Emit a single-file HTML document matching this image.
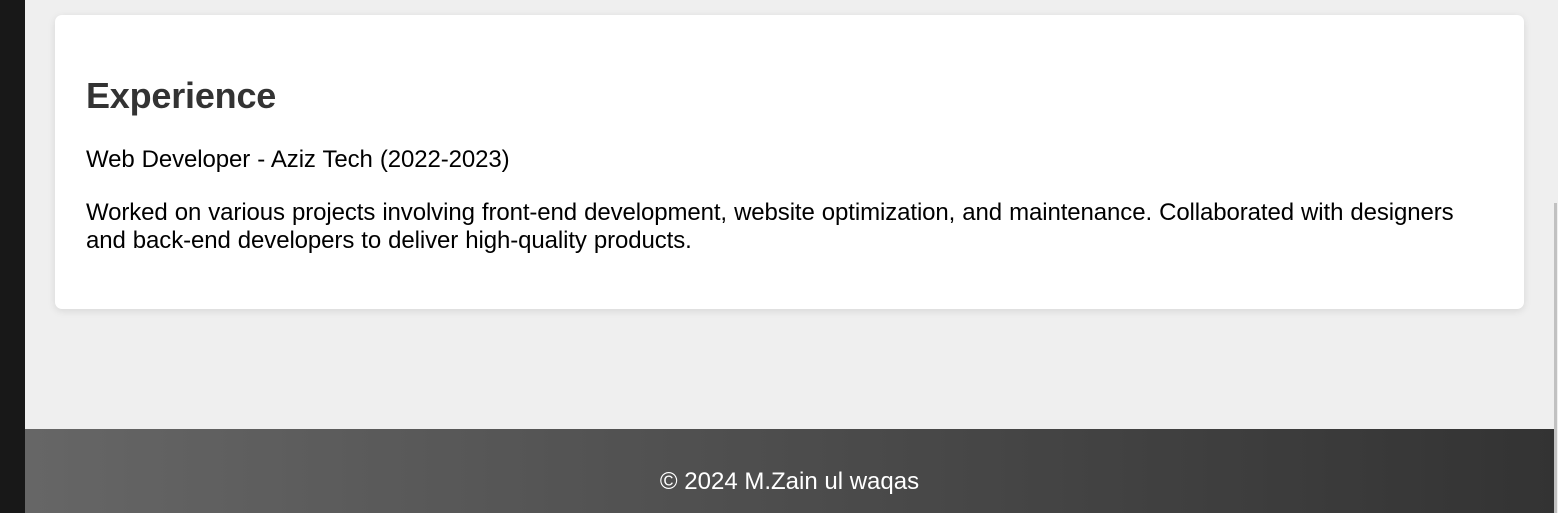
<!DOCTYPE html>
<html><head><style>
html,body{margin:0;padding:0;width:1558px;height:513px;overflow:hidden;background:#efefef;font-family:"Liberation Sans",Arial,sans-serif;position:relative}
.side{position:absolute;left:0;top:0;width:25px;height:513px;background:#181818}
.card{position:absolute;left:55px;top:15px;width:1469px;height:294px;background:#fff;border-radius:7px;box-shadow:0 2px 8px rgba(0,0,0,0.1)}
h2{position:absolute;left:31px;top:60px;margin:0;font-size:36px;line-height:42px;color:#333;font-weight:bold;letter-spacing:-0.2px}
.p{position:absolute;left:31px;margin:0;font-size:24px;line-height:28px;color:#000;width:1400px;letter-spacing:-0.1px;word-spacing:0.5px}
.foot{position:absolute;left:25px;top:429px;width:1529px;height:84px;background:linear-gradient(90deg,#666,#333);color:#fff;font-size:24px;text-align:center;line-height:106px}
.sb{position:absolute;left:1554px;top:203px;width:3px;height:310px;background:#c1c1c1}
</style></head><body>
<div class="side"></div>
<div class="card">
<h2>Experience</h2>
<p class="p" style="top:131px">Web Developer - Aziz Tech (2022-2023)</p>
<p class="p" style="top:184px">Worked on various projects involving front-end development, website optimization, and maintenance. Collaborated with designers and back-end developers to deliver high-quality products.</p>
</div>
<div class="foot">© 2024 M.Zain ul waqas</div>
<div class="sb"></div>
</body></html>
